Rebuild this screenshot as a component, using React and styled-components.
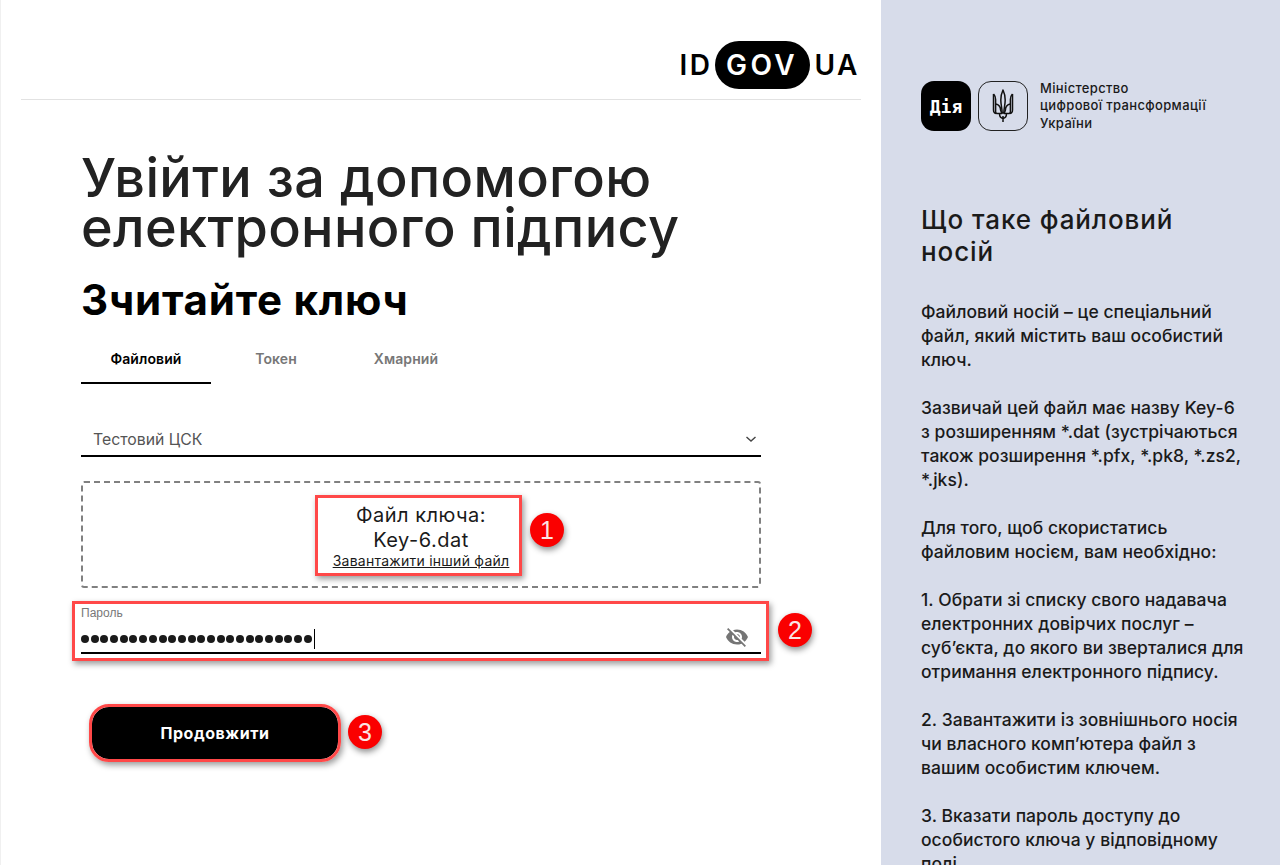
import React from 'react'
import styled, { createGlobalStyle } from 'styled-components'

const Global = createGlobalStyle`
  html, body { margin: 0; padding: 0; height: 865px; overflow: hidden; background: #fff; }
  body { font-family: Inter, "Liberation Sans", sans-serif; color: #1a1a1a; }
`

const Page = styled.div`
  display: flex;
  height: 865px;
  overflow: hidden;
`

const Main = styled.main`
  width: 881px;
  flex: none;
  box-sizing: border-box;
  border-left: 1px solid #f0f0f0;
  padding: 0 20px;
`

const Header = styled.header`
  height: 99px;
  border-bottom: 1px solid #e2e2e2;
  display: flex;
  justify-content: flex-end;
`

const Logo = styled.div`
  margin: 41px 1px 0 0;
  display: flex;
  align-items: center;
  height: 48px;
  font-size: 28px;
  font-weight: 600;
  letter-spacing: 2.5px;
  color: #000;
`

const LogoPill = styled.span`
  display: flex;
  align-items: center;
  justify-content: center;
  width: 95px;
  height: 48px;
  margin: 0 5px 0 2px;
  border-radius: 24px;
  background: #000;
  color: #fff;
  letter-spacing: 3.5px;
`

const Content = styled.div`
  width: 680px;
  margin-left: 60px;
`

const Title = styled.h1`
  margin: 53px 0 0;
  font-size: 54px;
  line-height: 50px;
  font-weight: 450;
  letter-spacing: 0.35px;
  color: #222;
`

const Subtitle = styled.h2`
  margin: 22px 0 0;
  font-size: 42px;
  line-height: 50px;
  font-weight: 700;
  letter-spacing: 0.8px;
  color: #000;
`

const Tabs = styled.div`
  display: flex;
  margin-top: 10px;
`

const Tab = styled.div`
  width: 130px;
  height: 49px;
  box-sizing: border-box;
  padding-top: 14px;
  text-align: center;
  font-size: 14px;
  line-height: 20px;
  font-weight: 600;
  letter-spacing: 0.1px;
  color: ${p => (p.$active ? '#000' : '#777')};
  border-bottom: 2px solid ${p => (p.$active ? '#000' : 'transparent')};
`

const Select = styled.div`
  margin-top: 36px;
  height: 37px;
  box-sizing: border-box;
  border-bottom: 2px solid #000;
  padding: 3px 4px 0 12px;
  display: flex;
  align-items: center;
  justify-content: space-between;
  font-size: 15.8px;
  color: #555;
`

const DropZone = styled.div`
  margin-top: 24px;
  height: 107px;
  box-sizing: border-box;
  border: 2px dashed #808080;
  border-radius: 3px;
  display: flex;
  flex-direction: column;
  align-items: center;
  padding-top: 20px;
`

const FileLabel = styled.div`
  font-size: 20px;
  line-height: 25px;
  letter-spacing: 0.5px;
  text-align: center;
`

const FileLink = styled.a`
  margin-top: -1px;
  font-size: 14px;
  line-height: 18px;
  letter-spacing: 0.25px;
  color: #1a1a1a;
  text-decoration: underline;
`

const Field = styled.div`
  position: relative;
  margin-top: 16px;
  height: 50px;
  padding-top: 2px;
  box-sizing: border-box;
  border-bottom: 2px solid #000;
`

const FieldLabel = styled.div`
  font-family: "Liberation Sans", sans-serif;
  font-size: 12px;
  line-height: 14px;
  color: #777;
`

const Dots = styled.div`
  display: flex;
  align-items: center;
  height: 22px;
  margin-top: 8px;
`

const Dot = styled.i`
  width: 8px;
  height: 8px;
  border-radius: 50%;
  background: #1a1a1a;
  margin: 0 1.7px 0 0;
  flex: none;
`

const Caret = styled.i`
  width: 1px;
  height: 20px;
  background: #000;
`

const EyeIcon = styled.svg`
  position: absolute;
  right: 12px;
  top: 21px;
  width: 24px;
  height: 24px;
  fill: #757575;
`

const Button = styled.button`
  display: block;
  margin: 53px 0 0 11px;
  width: 246px;
  height: 52px;
  border: 0;
  border-radius: 17px;
  background: #000;
  color: #fff;
  font-family: inherit;
  font-size: 16px;
  font-weight: 700;
  letter-spacing: 0.55px;
`

const Highlight = styled.div`
  position: absolute;
  box-sizing: border-box;
  border: 3px solid #ff4848;
  border-radius: ${p => p.$radius || 0}px;
  box-shadow: 2px 3px 6px rgba(0, 0, 0, 0.4);
  pointer-events: none;
`

const Badge = styled.div`
  position: absolute;
  width: 34px;
  height: 34px;
  border-radius: 50%;
  background: #fa0000;
  color: #fbe4e4;
  font-family: "Liberation Sans", sans-serif;
  font-size: 25px;
  line-height: 34px;
  text-align: center;
  box-shadow: 1px 3px 6px rgba(0, 0, 0, 0.45);
`

const Aside = styled.aside`
  flex: 1;
  background: #d7dcea;
  padding: 81px 0 0 40px;
  color: #1a1a1a;
`

const Brand = styled.div`
  display: flex;
  align-items: center;
  gap: 7px;
  height: 50px;
`

const DiiaLogo = styled.div`
  width: 50px;
  height: 50px;
  border-radius: 13px;
  background: #000;
  color: #fff;
  display: flex;
  align-items: center;
  justify-content: center;
  font-family: "DejaVu Sans Mono", monospace;
  font-size: 18px;
  font-weight: 700;
`

const TridentBox = styled.div`
  width: 48px;
  height: 48px;
  border: 1px solid #222;
  border-radius: 13px;
  display: flex;
  align-items: center;
  justify-content: center;
`

const Ministry = styled.div`
  margin-left: 5px;
  font-size: 13px;
  line-height: 17.5px;
  font-weight: 500;
  letter-spacing: 0.35px;
`

const AsideTitle = styled.h3`
  margin: 73px 0 0;
  font-size: 26px;
  line-height: 32px;
  font-weight: 500;
  letter-spacing: 0.9px;
`

const Para = styled.p`
  margin: 24px 0 0;
  font-size: 17.5px;
  line-height: 24px;
  font-weight: 500;
  letter-spacing: 0.05px;
  white-space: nowrap;
  &:first-of-type { margin-top: 32px; }
`

export default function App() {
  return (
    <Page>
      <Global />
      <Main>
        <Header>
          <Logo>ID<LogoPill>GOV</LogoPill>UA</Logo>
        </Header>
        <Content>
          <Title>Увійти за допомогою<br />електронного підпису</Title>
          <Subtitle>Зчитайте ключ</Subtitle>
          <Tabs>
            <Tab $active>Файловий</Tab>
            <Tab>Токен</Tab>
            <Tab>Хмарний</Tab>
          </Tabs>
          <Select>
            Тестовий ЦСК
            <svg width="12" height="12" viewBox="0 0 12 12" fill="none" stroke="#444" strokeWidth="1.4">
              <path d="M1.5 4l4.500 4 4.500-4" />
            </svg>
          </Select>
          <DropZone>
            <FileLabel>Файл ключа:<br />Key-6.dat</FileLabel>
            <FileLink>Завантажити інший файл</FileLink>
          </DropZone>
          <Field>
            <FieldLabel>Пароль</FieldLabel>
            <Dots>
              {Array.from({ length: 24 }, (_, i) => <Dot key={i} />)}
              <Caret />
            </Dots>
            <EyeIcon viewBox="0 0 24 24">
              <path d="M12 7c2.76 0 5 2.24 5 5 0 .65-.13 1.26-.36 1.83l2.92 2.92c1.51-1.26 2.7-2.89 3.43-4.75-1.73-4.39-6-7.5-11-7.5-1.4 0-2.74.25-3.98.7l2.16 2.16C10.74 7.13 11.35 7 12 7zM2 4.27l2.28 2.28.46.46C3.08 8.3 1.78 10.02 1 12c1.73 4.39 6 7.5 11 7.5 1.55 0 3.03-.3 4.38-.84l.42.42L19.73 22 21 20.73 3.27 3 2 4.27zM7.53 9.8l1.55 1.55c-.05.21-.08.43-.08.65 0 1.66 1.34 3 3 3 .22 0 .44-.03.65-.08l1.55 1.55c-.67.33-1.41.53-2.2.53-2.76 0-5-2.24-5-5 0-.79.2-1.53.53-2.2zm4.31-.78l3.15 3.15.02-.16c0-1.66-1.34-3-3-3l-.17.01z" />
            </EyeIcon>
          </Field>
          <Button>Продовжити</Button>
        </Content>
      </Main>
      <Aside>
        <Brand>
          <DiiaLogo>Дія</DiiaLogo>
          <TridentBox>
            <svg width="22" height="34" viewBox="0 0 22 34" fill="none" stroke="#111" strokeWidth="1.5" strokeLinejoin="round">
              <path d="M11 1C9.600 4 8.800 7 8.800 11c0 4 1.200 8 1.400 13h1.600c.2-5 1.400-9 1.400-13 0-4-.8-7-2.200-10z" />
              <path d="M1.500 5C3 6.500 3.600 8 3.600 10.500V23c0 .8.6 1.400 1.400 1.400h5.200M20.500 5C19 6.500 18.400 8 18.400 10.500V23c0 .8-.6 1.400-1.400 1.400h-5.200" />
              <path d="M1.500 5v16c0 2 1 3.400 3 3.400M20.500 5v16c0 2-1 3.400-3 3.400" />
              <path d="M3.600 15c3 .5 4.900 2.500 5 6l1.200 3.400M18.400 15c-3 .5-4.900 2.500-5 6l-1.200 3.400" />
              <path d="M7.500 24.400c0 3 1.500 4.600 3.500 5 2-.4 3.500-2 3.500-5M11 27v6" />
            </svg>
          </TridentBox>
          <Ministry>Міністерство<br />цифрової трансформації<br />України</Ministry>
        </Brand>
        <AsideTitle>Що таке файловий<br />носій</AsideTitle>
        <Para>Файловий носій – це спеціальний<br />файл, який містить ваш особистий<br />ключ.</Para>
        <Para>Зазвичай цей файл має назву Key-6<br />з розширенням *.dat (зустрічаються<br />також розширення *.pfx, *.pk8, *.zs2,<br />*.jks).</Para>
        <Para>Для того, щоб скористатись<br />файловим носієм, вам необхідно:</Para>
        <Para>1. Обрати зі списку свого надавача<br />електронних довірчих послуг –<br />суб’єкта, до якого ви зверталися для<br />отримання електронного підпису.</Para>
        <Para>2. Завантажити із зовнішнього носія<br />чи власного комп’ютера файл з<br />вашим особистим ключем.</Para>
        <Para>3. Вказати пароль доступу до<br />особистого ключа у відповідному<br />полі.</Para>
      </Aside>
      <Highlight style={{ left: 315, top: 495, width: 207, height: 81 }} />
      <Highlight style={{ left: 72, top: 601, width: 697, height: 60 }} />
      <Highlight $radius={20} style={{ left: 89, top: 704, width: 252, height: 58 }} />
      <Badge style={{ left: 530, top: 513 }}>1</Badge>
      <Badge style={{ left: 778, top: 613 }}>2</Badge>
      <Badge style={{ left: 348, top: 715 }}>3</Badge>
    </Page>
  )
}
